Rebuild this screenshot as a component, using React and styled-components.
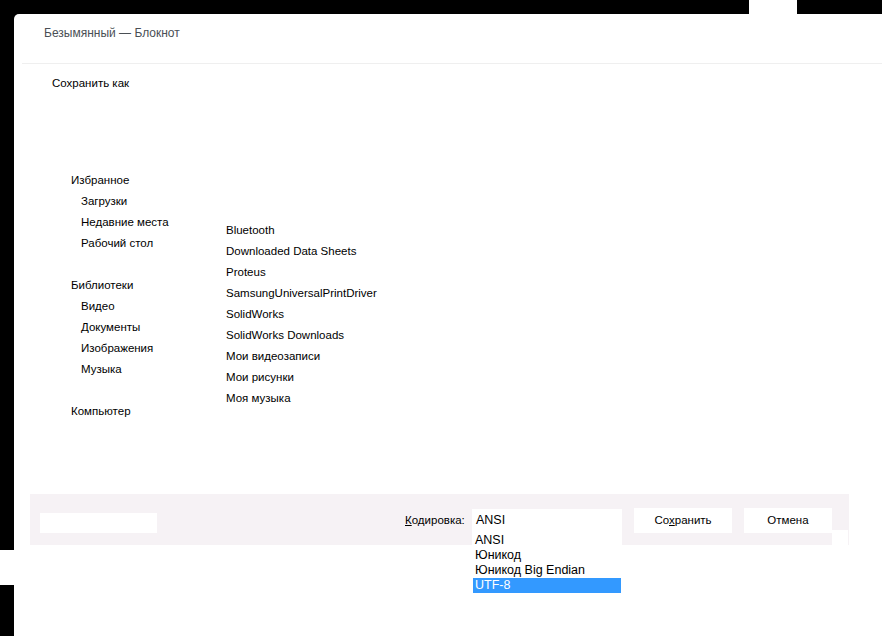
import React from "react";
import styled, { createGlobalStyle } from "styled-components";

const favorites = ["Загрузки", "Недавние места", "Рабочий стол"];
const libraries = ["Видео", "Документы", "Изображения", "Музыка"];
const folders = [
  "Bluetooth",
  "Downloaded Data Sheets",
  "Proteus",
  "SamsungUniversalPrintDriver",
  "SolidWorks",
  "SolidWorks Downloads",
  "Мои видеозаписи",
  "Мои рисунки",
  "Моя музыка",
];
const encodings = ["ANSI", "Юникод", "Юникод Big Endian", "UTF-8"];

function App() {
  return (
    <>
      <GlobalStyle />
      <Screen>
        <TopEdge>
          <Notch />
        </TopEdge>
        <LeftEdge>
          <EdgeGap />
        </LeftEdge>
        <Window>
          <TitleBar>Безымянный — Блокнот</TitleBar>
          <Divider />
          <Heading>Сохранить как</Heading>
          <Body>
            <NavTree>
              <NavItem>Избранное</NavItem>
              {favorites.map((item) => (
                <NavItem key={item} $child>
                  {item}
                </NavItem>
              ))}
              <NavSpacer />
              <NavItem>Библиотеки</NavItem>
              {libraries.map((item) => (
                <NavItem key={item} $child>
                  {item}
                </NavItem>
              ))}
              <NavSpacer />
              <NavItem>Компьютер</NavItem>
            </NavTree>
            <FileList>
              {folders.map((name) => (
                <FileRow key={name}>{name}</FileRow>
              ))}
            </FileList>
          </Body>
          <BottomBar>
            <FileNameInput />
            <EncodingLabel>
              <u>К</u>одировка:
            </EncodingLabel>
            <Select>
              ANSI
              <DropList>
                {encodings.map((enc) => (
                  <DropOption key={enc} $active={enc === "UTF-8"}>
                    {enc}
                  </DropOption>
                ))}
              </DropList>
            </Select>
            <Button>
              Со<u>х</u>ранить
            </Button>
            <Button $narrow>Отмена</Button>
            <CornerPiece />
          </BottomBar>
        </Window>
      </Screen>
    </>
  );
}

export default App;

const GlobalStyle = createGlobalStyle`
  html, body {
    margin: 0;
    padding: 0;
    background: #000;
  }
  body {
    font-family: "Liberation Sans", Arial, sans-serif;
    font-size: 11.5px;
    color: #000;
  }
`;

const Screen = styled.div`
  display: grid;
  grid-template-columns: 14px 868px;
  grid-template-rows: 14px 622px;
  width: 882px;
  height: 636px;
  overflow: hidden;
  background: #000;
`;

const TopEdge = styled.div`
  grid-column: 1 / 3;
  display: flex;
  background: #000;
`;

const Notch = styled.div`
  margin-left: 749px;
  width: 48px;
  height: 14px;
  background: #fff;
`;

const LeftEdge = styled.div`
  background: #000;
  padding-top: 536px;
`;

const EdgeGap = styled.div`
  height: 35px;
  background: #fff;
`;

const Window = styled.div`
  display: flex;
  flex-direction: column;
  background: #fff;
  border-top-left-radius: 5px;
`;

const TitleBar = styled.div`
  height: 49px;
  box-sizing: border-box;
  padding: 9px 0 0 30px;
  line-height: 20px;
  font-size: 12px;
  color: #4a4f55;
`;

const Divider = styled.div`
  height: 1px;
  margin-left: 8px;
  background: #efefef;
`;

const Heading = styled.div`
  margin: 9px 0 0 38px;
  line-height: 20px;
`;

const Body = styled.div`
  display: flex;
  height: 401px;
  box-sizing: border-box;
  padding: 77px 0 0 57px;
`;

const NavTree = styled.div`
  display: flex;
  flex-direction: column;
  width: 155px;
`;

const NavItem = styled.div`
  height: 21px;
  line-height: 21px;
  padding-left: ${(p) => (p.$child ? "10px" : "0")};
  white-space: nowrap;
`;

const NavSpacer = styled.div`
  height: 21px;
`;

const FileList = styled.div`
  display: flex;
  flex-direction: column;
  padding-top: 50px;
`;

const FileRow = styled.div`
  height: 21px;
  line-height: 21px;
  white-space: nowrap;
`;

const BottomBar = styled.div`
  position: relative;
  display: flex;
  align-items: flex-start;
  margin-left: 16px;
  width: 819px;
  height: 51px;
  box-sizing: border-box;
  padding: 0 1px 0 10px;
  background: #f6f2f5;
`;

const FileNameInput = styled.div`
  margin-top: 19px;
  width: 117px;
  height: 20px;
  background: #fff;
`;

const EncodingLabel = styled.div`
  margin-left: auto;
  width: 67px;
  margin-top: 19px;
  line-height: 15px;
  white-space: nowrap;
`;

const Select = styled.div`
  position: relative;
  margin-top: 15px;
  width: 150px;
  height: 36px;
  box-sizing: border-box;
  padding: 4px 0 0 4px;
  line-height: 15px;
  font-size: 12.5px;
  background: #fff;
`;

const DropList = styled.div`
  position: absolute;
  top: 24px;
  left: 0;
  width: 150px;
  box-sizing: border-box;
  padding: 0 1px;
  background: #fff;
  z-index: 2;
`;

const DropOption = styled.div`
  height: 15px;
  line-height: 15px;
  padding-left: 2px;
  white-space: nowrap;
  background: ${(p) => (p.$active ? "#3399ff" : "#fff")};
  color: ${(p) => (p.$active ? "#fff" : "#000")};
`;

const Button = styled.div`
  margin-top: 14px;
  margin-left: 12px;
  width: ${(p) => (p.$narrow ? "88px" : "98px")};
  height: 25px;
  line-height: 25px;
  text-align: center;
  background: #fff;
`;

const CornerPiece = styled.div`
  align-self: flex-end;
  width: 16px;
  height: 15px;
  background: #fff;
`;
